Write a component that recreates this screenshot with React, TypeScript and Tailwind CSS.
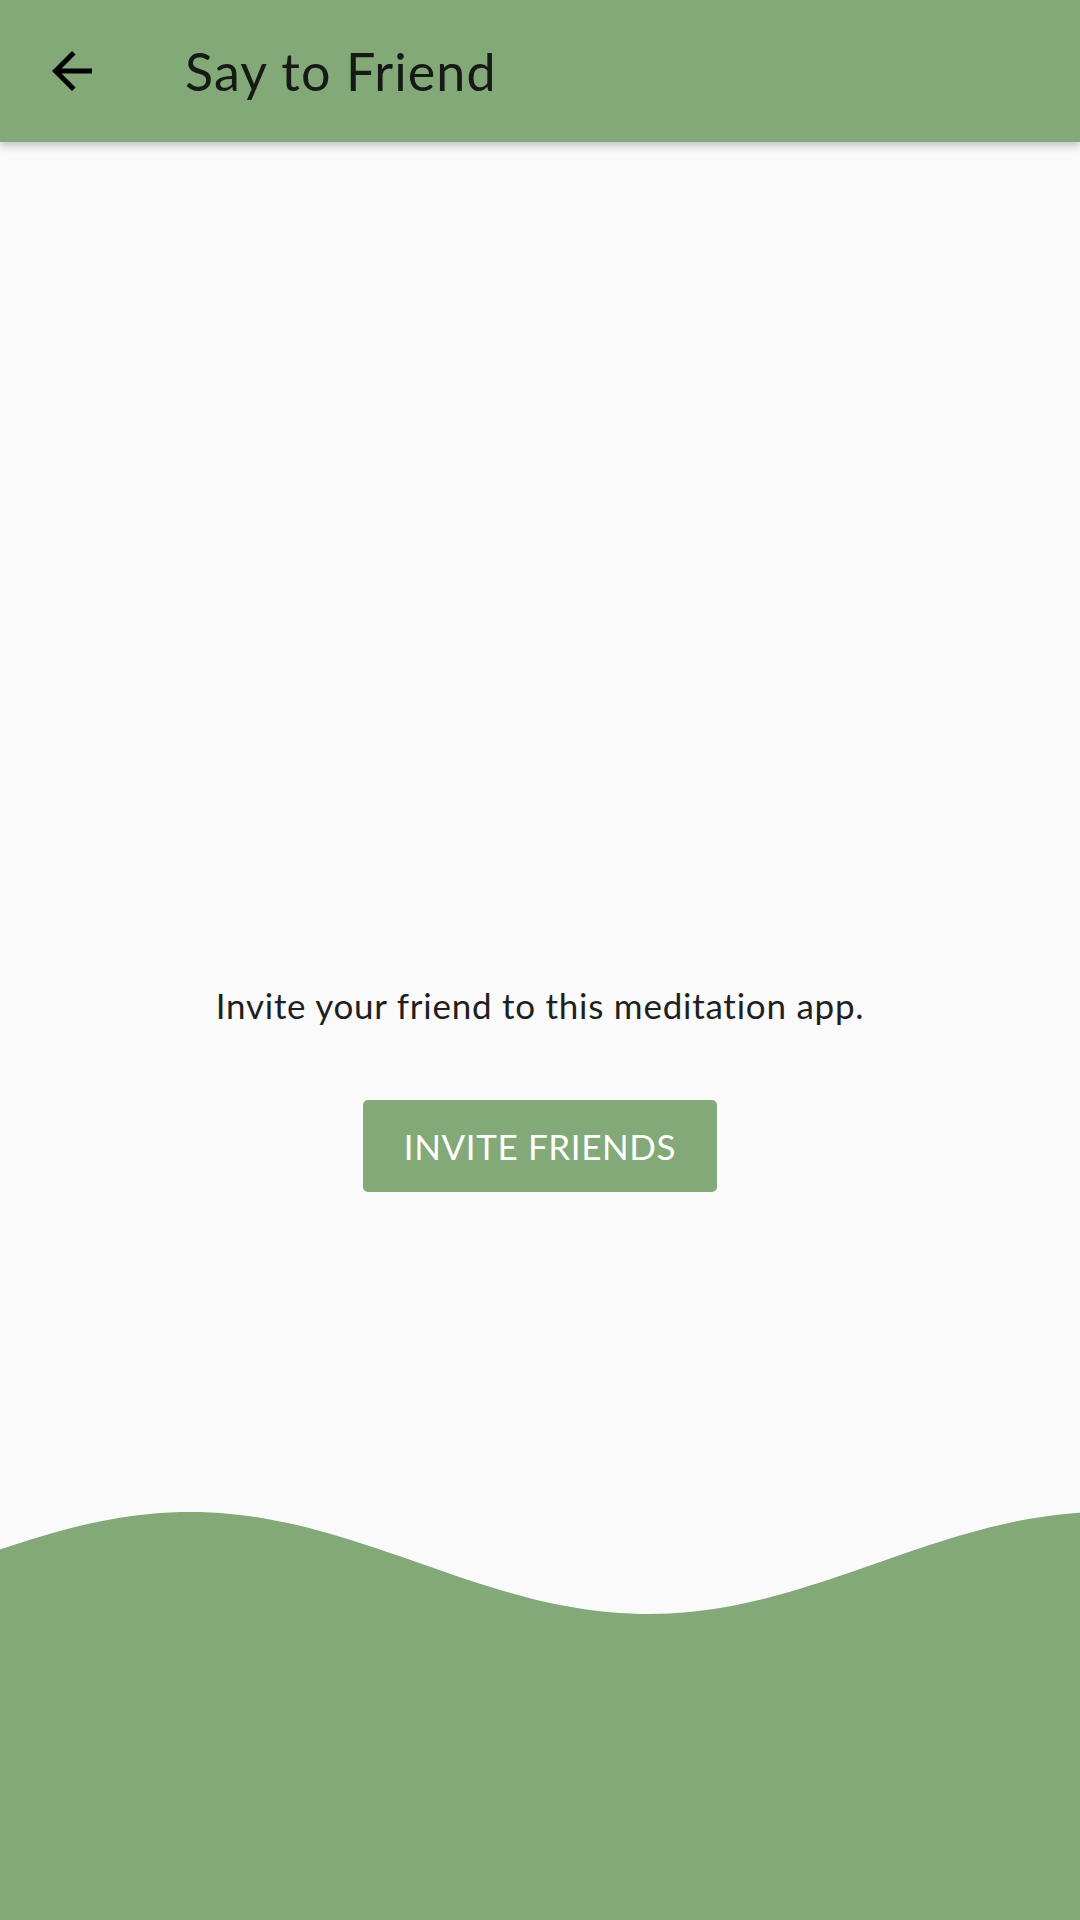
import React from "react";

const buildWave = () => {
  const pts: string[] = [];
  for (let x = 0; x <= 1080; x += 10) {
    const y = 51 - 51 * Math.cos((2 * Math.PI * (x - 190)) / 916);
    pts.push(`${x},${y.toFixed(2)}`);
  }
  return `M0,408 L${pts.join(" L")} L1080,408 Z`;
};

const WAVE = buildWave();

export default function App() {
  return (
    <div
      className="w-[1080px] h-[1920px] flex flex-col bg-[#fafafa] overflow-hidden"
      style={{ fontFamily: "Lato, 'Open Sans', sans-serif" }}
    >
      <header className="relative z-10 h-[142px] shrink-0 bg-[#83a978] flex items-center shadow-[0_4px_8px_rgba(0,0,0,0.22)]">
        <div className="w-[185px] shrink-0 flex items-center">
          <svg viewBox="0 0 24 24" className="ml-[42px] w-[60px] h-[60px]" fill="#000">
            <path d="M20 11H7.83l5.59-5.59L12 4l-8 8 8 8 1.41-1.41L7.83 13H20v-2z" />
          </svg>
        </div>
        <h1 className="text-[52px] leading-none tracking-[1.1px] text-[#161a14] font-normal">Say to Friend</h1>
      </header>
      <main className="flex-1 flex flex-col items-center pt-[843px]">
        <p className="text-[35px] leading-[40px] tracking-[0.75px] text-[#1f1f1f]">Invite your friend to this meditation app.</p>
        <button className="mt-[75px] w-[354px] h-[92px] rounded-[5px] bg-[#83a978] text-white text-[35px] tracking-[0.6px] leading-none flex items-center justify-center">
          INVITE FRIENDS
        </button>
      </main>
      <svg viewBox="0 0 1080 408" className="w-[1080px] h-[408px] shrink-0 block" preserveAspectRatio="none">
        <path d={WAVE} fill="#83a978" />
      </svg>
    </div>
  );
}
